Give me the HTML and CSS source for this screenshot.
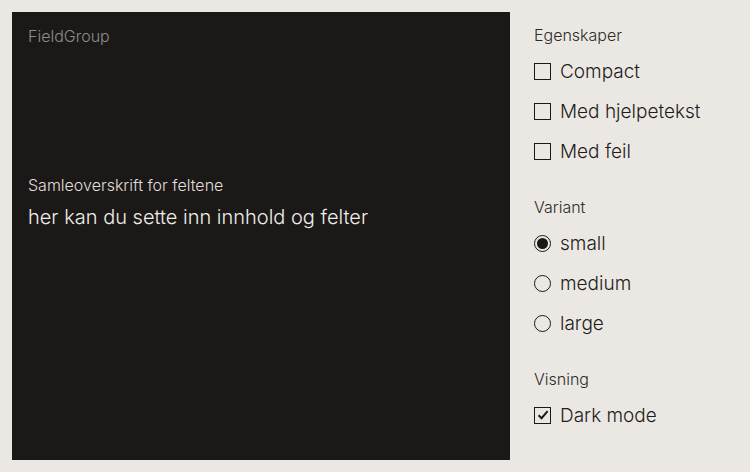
FILE: index.html
```html
<!DOCTYPE html>
<html lang="no">
<head>
<meta charset="utf-8">
<link rel="stylesheet" href="styles.css">
</head>
<body>
<div class="page">
  <main class="preview">
    <div class="preview-label">FieldGroup</div>
    <div class="group">
      <div class="group-title">Samleoverskrift for feltene</div>
      <div class="group-body">her kan du sette inn innhold og felter</div>
    </div>
  </main>
  <aside class="controls">
    <section class="ctl-section">
      <div class="ctl-title">Egenskaper</div>
      <label class="opt"><span class="box"></span><span>Compact</span></label>
      <label class="opt"><span class="box"></span><span>Med hjelpetekst</span></label>
      <label class="opt"><span class="box"></span><span>Med feil</span></label>
    </section>
    <section class="ctl-section">
      <div class="ctl-title">Variant</div>
      <label class="opt"><span class="radio on"></span><span>small</span></label>
      <label class="opt"><span class="radio"></span><span>medium</span></label>
      <label class="opt"><span class="radio"></span><span>large</span></label>
    </section>
    <section class="ctl-section">
      <div class="ctl-title">Visning</div>
      <label class="opt"><span class="box checked"><svg viewBox="0 0 14 14" width="14" height="14"><path d="M2.6 7.2 L5.6 10.2 L11.6 3.2" fill="none" stroke="#1b1918" stroke-width="2"/></svg></span><span>Dark mode</span></label>
    </section>
  </aside>
</div>
</body>
</html>
```

FILE: styles.css
```css
* { box-sizing: border-box; }
html, body { margin: 0; padding: 0; }
body {
  background: #ebe8e4;
  font-family: Inter, "Liberation Sans", sans-serif;
  font-weight: 300;
  color: #1b1918;
}
.page {
  display: flex;
  gap: 24px;
  padding: 12px;
  height: 472px;
}
.preview {
  width: 498px;
  height: 448px;
  background: #1b1918;
  padding: 14px 16px;
  display: flex;
  flex-direction: column;
}
.preview-label {
  color: #8f8c89;
  font-size: 16px;
  line-height: 20px;
}
.group {
  margin-top: 129px;
}
.group-title {
  color: #e2ded9;
  font-size: 16px;
  line-height: 20px;
}
.group-body {
  color: #f0ede9;
  font-size: 20px;
  line-height: 28px;
  margin-top: 8px;
}
.controls {
  display: flex;
  flex-direction: column;
  gap: 25px;
  padding-top: 12px;
}
.ctl-section {
  display: flex;
  flex-direction: column;
}
.ctl-title {
  font-size: 16px;
  line-height: 22px;
  color: #2e2b29;
  margin-bottom: 5px;
}
.opt {
  display: flex;
  align-items: center;
  gap: 9px;
  height: 40px;
  font-size: 19px;
  color: #1f1c1a;
}
.box {
  width: 17px;
  height: 17px;
  border: 1.5px solid #1b1918;
  display: flex;
  align-items: center;
  justify-content: center;
}
.box svg { display: block; }
.radio {
  width: 17px;
  height: 17px;
  border: 1.5px solid #1b1918;
  border-radius: 50%;
  display: flex;
  align-items: center;
  justify-content: center;
}
.radio.on::after {
  content: "";
  width: 11px;
  height: 11px;
  border-radius: 50%;
  background: #1b1918;
}
```
